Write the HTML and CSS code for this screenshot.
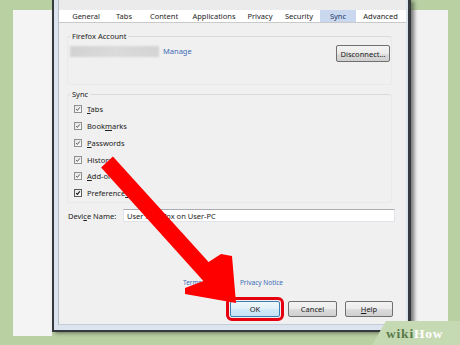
FILE: index.html
```html
<!DOCTYPE html>
<html>
<head>
    <title>Options - Sync</title>
    <link rel="stylesheet" href="styles.css">
</head>
<body>
    <div class="stage">
        <div class="side side-left"></div>
        <div class="dialog">
            <div class="client">
                <div class="topband"></div>
                <div class="tabs">
                    <span class="tab tab-general">General</span>
                    <span class="tab tab-tabs">Tabs</span>
                    <span class="tab tab-content">Content</span>
                    <span class="tab tab-apps">Applications</span>
                    <span class="tab tab-privacy">Privacy</span>
                    <span class="tab tab-security">Security</span>
                    <span class="tab tab-sync">Sync</span>
                    <span class="tab tab-advanced">Advanced</span>
                </div>

                <fieldset class="group group-account">
                    <legend>Firefox Account</legend>
                    <div class="account-row">
                        <span class="redacted"></span>
                        <a class="link manage">Manage</a>
                        <button class="btn btn-disconnect">Disconnect...</button>
                    </div>
                </fieldset>

                <fieldset class="group group-sync">
                    <legend>Sync</legend>
                    <div class="check"><span class="box"><svg viewBox="0 0 8 8"><path d="M1.6 4.1 L3.2 5.9 L6.4 1.8"/></svg></span><span><u>T</u>abs</span></div>
                    <div class="check"><span class="box"><svg viewBox="0 0 8 8"><path d="M1.6 4.1 L3.2 5.9 L6.4 1.8"/></svg></span><span>Book<u>m</u>arks</span></div>
                    <div class="check"><span class="box"><svg viewBox="0 0 8 8"><path d="M1.6 4.1 L3.2 5.9 L6.4 1.8"/></svg></span><span><u>P</u>asswords</span></div>
                    <div class="check"><span class="box"><svg viewBox="0 0 8 8"><path d="M1.6 4.1 L3.2 5.9 L6.4 1.8"/></svg></span><span>Histor<u>y</u></span></div>
                    <div class="check"><span class="box"><svg viewBox="0 0 8 8"><path d="M1.6 4.1 L3.2 5.9 L6.4 1.8"/></svg></span><span><u>A</u>dd-ons</span></div>
                    <div class="check check-focus"><span class="box"><svg viewBox="0 0 8 8"><path d="M1.6 4.1 L3.2 5.9 L6.4 1.8"/></svg></span><span>Preference<u>s</u></span></div>
                </fieldset>

                <div class="device-row">
                    <span class="device-label">Devi<u>c</u>e Name:</span>
                    <input class="device-input" type="text" value="User's Firefox on User-PC">
                </div>

                <div class="links">
                    <a class="link">Terms of Service</a>
                    <a class="link">Privacy Notice</a>
                </div>

                <div class="buttons">
                    <button class="btn btn-ok">OK</button>
                    <button class="btn btn-cancel">Cancel</button>
                    <button class="btn btn-help"><u>H</u>elp</button>
                </div>
            </div>
        </div>
        <div class="side side-right"></div>
    </div>

    <!-- red pointer drawn over the dialog -->
    <svg class="arrow" width="460" height="345" viewBox="0 0 460 345">
        <polygon points="112.9,156.6 208.6,262 221,254 232,256 236,303 185,294 185,288 203.4,281 101.1,167.4"/>
    </svg>

    <div class="watermark"><span class="wm-wiki">wiki</span><span class="wm-how">How</span></div>
</body>
</html>
```

FILE: styles.css
```css
body {
    margin: 0;
    background-color: #b9d0a3;
    font-family: "Noto Sans", "DejaVu Sans", sans-serif;
    font-size: 7.5px;
    color: #222;
    width: 460px;
    height: 345px;
    overflow: hidden;
}

.stage {
    display: flex;
    align-items: flex-start;
    padding-left: 13px;
}

.side {
    margin-top: 10px;
    height: 326px;
    background-color: #f4f4f4;
}

.side-left {
    width: 39px;
}

.side-right {
    width: 37px;
    background: linear-gradient(90deg, #d8d8d8 0, #f2f2f2 6px, #f2f2f2 100%);
}

/* window frame */
.dialog {
    position: relative;
    z-index: 1;
    border-left: 2px solid #353a40;
    border-right: 3px solid #353a40;
    border-bottom: 2px solid #353a40;
    padding: 0 2px 5px 4px;
    background-color: #dce5ef;
    box-shadow: 3px 1px 4px rgba(0, 0, 0, 0.45);
}

.client {
    box-sizing: border-box;
    width: 348px;
    height: 325px;
    border-left: 1px solid #b4bcc6;
    border-bottom: 1px solid #c4ccd6;
    background-color: #f0f0f0;
    display: flex;
    flex-direction: column;
}

.topband {
    height: 10px;
    background-color: #ebebeb;
}

.tabs {
    display: flex;
    height: 12px;
    background-color: #fff;
    border-bottom: 1px solid #c9c9c9;
    line-height: 12px;
    color: #1e1e1e;
}

.tab {
    text-align: center;
    white-space: nowrap;
}

.tab-general { width: 40px; margin-left: 7px; }
.tab-tabs { width: 36px; }
.tab-content { width: 44px; }
.tab-apps { width: 56px; }
.tab-privacy { width: 36px; }
.tab-security { width: 42px; }
.tab-sync { width: 36px; background-color: #c9d8ee; color: #1f3a6b; }
.tab-advanced { width: 49px; }

/* group boxes */
.group {
    min-width: 0;
    margin: 0 14px 0 8px;
    border: 1px solid #e9e9e9;
    border-top-color: #dadada;
    border-radius: 3px;
}

.group legend {
    padding: 0 2px;
    line-height: 9px;
}

.group-account {
    margin-top: 9px;
    padding: 0 1px 22px 2px;
}

.account-row {
    display: flex;
    align-items: flex-start;
    margin-top: 4px;
    height: 17px;
}

.redacted {
    width: 89px;
    height: 11px;
    margin-top: 1px;
    background: linear-gradient(90deg, #d2d2d2, #dadada 50%, #d4d4d4);
    filter: blur(1px);
}

.link {
    color: #3d6db5;
}

.manage {
    margin-left: 4px;
    margin-top: 1px;
    line-height: 11px;
}

.btn {
    box-sizing: border-box;
    height: 16px;
    padding: 0;
    border: 1px solid #707070;
    border-radius: 2px;
    background: linear-gradient(#f3f3f3 0, #ebebeb 50%, #dddddd 51%, #cfcfcf 100%);
    font-family: inherit;
    font-size: 7.5px;
    color: #1a1a1a;
}

.btn-disconnect {
    margin-left: auto;
    width: 54px;
    height: 17px;
}

.group-sync {
    margin-top: 4.5px;
    padding: 2.65px 1px 1px 2px;
}

.check {
    display: flex;
    align-items: center;
    height: 16.7px;
    margin-left: 4px;
}

.box {
    box-sizing: border-box;
    width: 8px;
    height: 8px;
    margin-right: 5px;
    border: 1px solid #8e8f8f;
    background: linear-gradient(135deg, #e4e4e4, #fdfdfd);
}

.box svg {
    display: block;
    width: 6px;
    height: 6px;
}

.box path {
    fill: none;
    stroke: #3a3a3a;
    stroke-width: 1.1;
}

.check-focus .box {
    border-color: #5a5a5a;
}

.check-focus .box path {
    stroke: #111;
    stroke-width: 1.4;
}

.device-row {
    display: flex;
    align-items: center;
    height: 13px;
    margin: 6px 11px 0 9px;
}

.device-label {
    width: 55px;
    white-space: nowrap;
}

.device-input {
    flex: 1;
    min-width: 0;
    box-sizing: border-box;
    height: 13px;
    padding: 0 3px;
    border: 1px solid #e2e3ea;
    border-top-color: #abadb3;
    background-color: #fff;
    font-family: inherit;
    font-size: 7.5px;
    color: #222;
}

.links {
    display: flex;
    gap: 7px;
    margin-top: auto;
    padding-left: 124px;
    font-size: 6.5px;
    line-height: 8px;
}

.buttons {
    display: flex;
    justify-content: flex-end;
    gap: 8px;
    margin: 14px 13px 7px 0;
}

.btn-ok {
    width: 50px;
    border-color: #3c7fb1;
    background: linear-gradient(#eef7fc 0, #e3f1fa 50%, #d2e9f7 51%, #c6e2f5 100%);
    outline: 3px solid #e6000f;
    outline-offset: 1px;
}

.btn-cancel {
    width: 49px;
}

.btn-help {
    width: 48px;
}

/* overlays */
.arrow {
    position: absolute;
    left: 0;
    top: 0;
    z-index: 2;
    pointer-events: none;
}

.arrow polygon {
    fill: #ff0000;
}

.watermark {
    position: absolute;
    left: 372px;
    top: 321px;
    z-index: 3;
    width: 88px;
    height: 24px;
    box-sizing: border-box;
    padding: 5px 0 0 14px;
    background-color: #c5d9b2;
    clip-path: polygon(14px 0, 100% 0, 100% 100%, 0 100%);
    font-family: "Liberation Serif", "DejaVu Serif", serif;
    font-weight: bold;
    font-size: 13.5px;
    line-height: 16px;
    letter-spacing: 0.8px;
    white-space: nowrap;
}

.wm-wiki {
    color: #587a49;
}

.wm-how {
    color: #fff;
}
```
